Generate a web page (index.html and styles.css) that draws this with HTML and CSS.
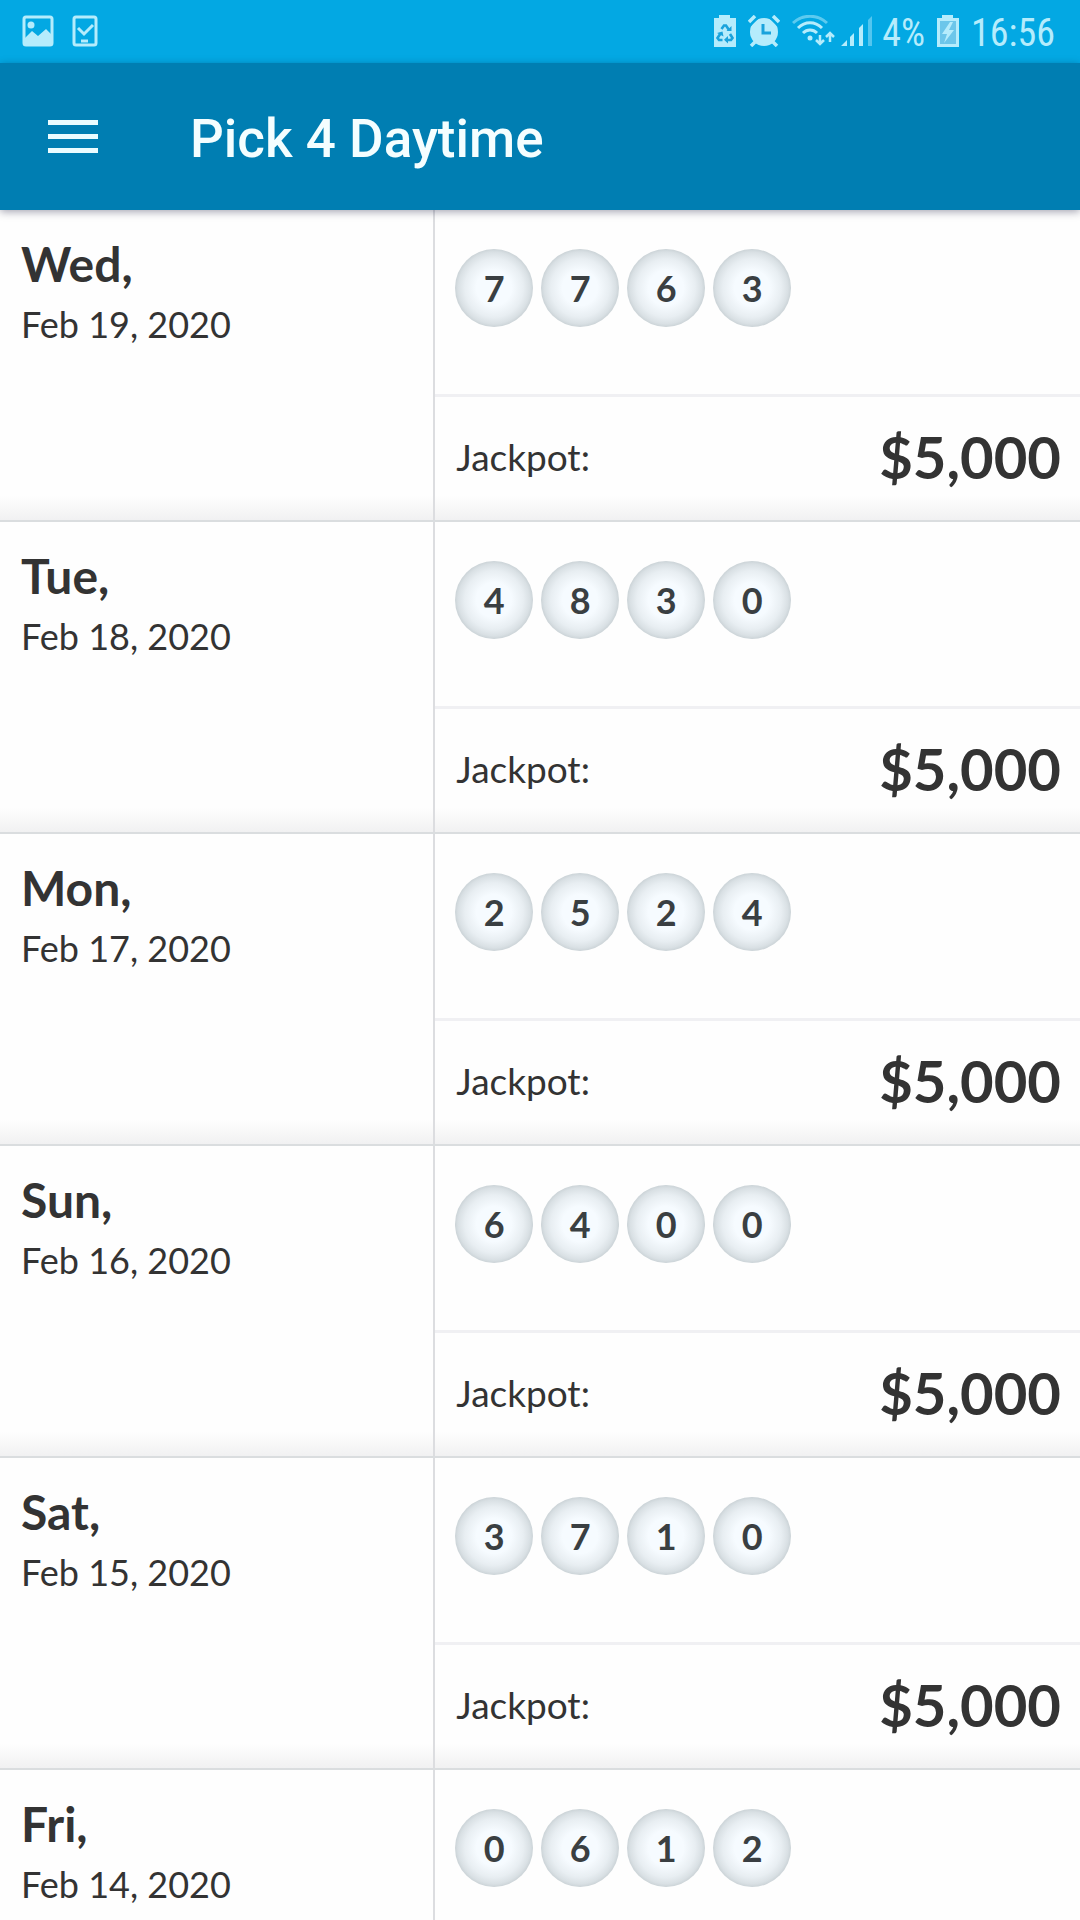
FILE: index.html
```html
<!DOCTYPE html>
<html lang="en">
<head>
	<meta charset="utf-8">
	<meta name="viewport" content="width=device-width, initial-scale=1">
	<title>Pick 4 Daytime</title>
	<link rel="stylesheet" href="styles.css">
</head>

<body>
<div class="status-bar">
	<div class="status-left">
		<svg width="32" height="32" viewBox="0 0 32 32">
			<rect x="2" y="2" width="28" height="28" rx="2" fill="none" stroke="currentColor" stroke-width="3"/>
			<circle cx="9" cy="10" r="3.5" fill="currentColor"/>
			<path d="M2 24l8-8 6 5 8-7 6 6v10H2z" fill="currentColor"/>
		</svg>
		<svg width="26" height="32" viewBox="0 0 26 32" fill="none" stroke="currentColor" stroke-width="3">
			<rect x="2" y="2" width="22" height="28" rx="2"/>
			<path d="M6 13l6 6 9-9M9 26h7"/>
		</svg>
	</div>
	<div class="status-right">
		<svg width="22" height="32" viewBox="0 0 22 32">
			<path d="M5 0h11v3h6v29H0V3h5z" fill="currentColor"/>
			<g fill="none" stroke="#1aa3dc" stroke-width="2.6">
				<path d="M7.500 14l2.500-3.500h2l3 4.500M16 19l2.500 4-1.500 2h-4M8.500 25H5l-1.500-2 3-4.500"/>
			</g>
			<path d="M12.500 16h5v-5zM14 21v7.500l-4-3.700zM3 18l5.500-1.500 1 5z" fill="#1aa3dc"/>
		</svg>
		<svg width="32" height="32" viewBox="0 0 32 32">
			<circle cx="16" cy="17" r="14" fill="currentColor"/>
			<path d="M1 9l8-8M31 9l-8-8" stroke="#03a8e3" stroke-width="6"/>
			<path d="M1 7l6-6M31 7l-6-6M7 27l-4 4M25 27l4 4" stroke="currentColor" stroke-width="3.500"/>
			<path d="M15 9v9h8" fill="none" stroke="#1aa3dc" stroke-width="3"/>
		</svg>
		<svg class="icon-wifi" width="43" height="32" viewBox="0 0 43 32" fill="none" stroke="currentColor" stroke-width="3">
			<path d="M1 8C11-1 25-1 35 8" opacity=".5"/>
			<path d="M6 13C13 6 23 6 30 13M11 18c4-4 10-4 14 0"/>
			<circle cx="18" cy="23" r="2.5" fill="currentColor" stroke="none"/>
			<path d="M28 20v9M24 25l4 4 4-4M38 27v-9M34 22l4-4 4 4" stroke-width="2.5"/>
		</svg>
		<svg class="icon-signal" width="32" height="32" viewBox="0 0 32 32" fill="currentColor">
			<path d="M0 31l6-6v6zM9 22l4-4v13H9zM18 13l4-4v22h-4z"/>
			<path d="M27 5l4-4v30h-4z" opacity=".45"/>
		</svg>
		<span>4%</span>
		<svg width="22" height="32" viewBox="0 0 22 32">
			<path d="M5 0h11v3h6v29H0V3h5z" fill="currentColor"/>
			<path d="M3 6h16v23H3z" fill="#6cc6ea"/>
			<path d="M13 7L5 19h5l-3 9 10-13h-5l4-8z" fill="currentColor"/>
		</svg>
		<span>16:56</span>
	</div>
</div>

<header class="header">
	<button class="menu-button" type="button" aria-label="Menu">
		<span></span>
		<span></span>
		<span></span>
	</button>
	<h1>Pick 4 Daytime</h1>
</header>

<ul class="draws">
	<li class="draw">
		<div class="draw-date"><strong>Wed,</strong><span>Feb 19, 2020</span></div>
		<div class="draw-result">
			<div class="balls"><span>7</span><span>7</span><span>6</span><span>3</span></div>
			<div class="jackpot"><span>Jackpot:</span><strong>$5,000</strong></div>
		</div>
	</li>
	<li class="draw">
		<div class="draw-date"><strong>Tue,</strong><span>Feb 18, 2020</span></div>
		<div class="draw-result">
			<div class="balls"><span>4</span><span>8</span><span>3</span><span>0</span></div>
			<div class="jackpot"><span>Jackpot:</span><strong>$5,000</strong></div>
		</div>
	</li>
	<li class="draw">
		<div class="draw-date"><strong>Mon,</strong><span>Feb 17, 2020</span></div>
		<div class="draw-result">
			<div class="balls"><span>2</span><span>5</span><span>2</span><span>4</span></div>
			<div class="jackpot"><span>Jackpot:</span><strong>$5,000</strong></div>
		</div>
	</li>
	<li class="draw">
		<div class="draw-date"><strong>Sun,</strong><span>Feb 16, 2020</span></div>
		<div class="draw-result">
			<div class="balls"><span>6</span><span>4</span><span>0</span><span>0</span></div>
			<div class="jackpot"><span>Jackpot:</span><strong>$5,000</strong></div>
		</div>
	</li>
	<li class="draw">
		<div class="draw-date"><strong>Sat,</strong><span>Feb 15, 2020</span></div>
		<div class="draw-result">
			<div class="balls"><span>3</span><span>7</span><span>1</span><span>0</span></div>
			<div class="jackpot"><span>Jackpot:</span><strong>$5,000</strong></div>
		</div>
	</li>
	<li class="draw">
		<div class="draw-date"><strong>Fri,</strong><span>Feb 14, 2020</span></div>
		<div class="draw-result">
			<div class="balls"><span>0</span><span>6</span><span>1</span><span>2</span></div>
		</div>
	</li>
</ul>
</body>
</html>
```

FILE: styles.css
```css
*{box-sizing:border-box;}
body{display:flex;flex-direction:column;height:100vh;margin:0;background-color:#fefefe;color:#333;font-family:Lato, sans-serif;font-size:36px;}

/* status bar */
.status-bar{display:flex;flex:none;justify-content:space-between;align-items:center;height:63px;padding:0 25px 2px 22px;background-color:#03a8e3;color:#b5ecfc;font-family:"Roboto Condensed", Roboto, sans-serif;}
.status-bar svg{display:block;flex:none;}
.status-left{display:flex;gap:18px;}
.status-right{display:flex;align-items:center;gap:12px;font-size:38px;line-height:40px;}
.status-right span{padding-top:4px;}
.icon-wifi{margin-right:-6px;}
.icon-signal{margin-right:-3px;}

/* title bar */
.header{display:flex;flex:none;align-items:center;gap:88px;height:147px;padding:0 44px;background-color:#007eb2;color:#f4feff;position:relative;z-index:1;box-shadow:0 2px 8px rgba(0,0,40,.35);}
.header h1{margin:0;padding-top:4px;font:500 53px/60px Roboto, sans-serif;}
.menu-button{display:flex;flex-direction:column;gap:9px;padding:4px;border:0;background:none;cursor:pointer;}
.menu-button span{width:50px;height:5px;background-color:#ebfcff;}

/* draw list */
.draws{flex:1;min-height:0;margin:0;padding:0;list-style:none;overflow-y:auto;scrollbar-width:none;}
.draw{display:grid;grid-template-columns:40.3% 1fr;height:312px;border-bottom:2px solid #dadddf;background-image:linear-gradient(to top, #f1f1f2, #fefefe 24px);}
.draw-date{display:flex;flex-direction:column;padding:24px 21px;border-right:2px solid #dcdde0;}
.draw-date strong{font-size:48px;line-height:60px;}
.draw-date span{line-height:60px;}
.draw-result{display:flex;flex-direction:column;}
.balls{display:flex;gap:8px;height:187px;padding:39px 20px;border-bottom:3px solid #f0f0f3;}
.balls span{width:78px;height:78px;border-radius:50%;background:radial-gradient(closest-side, #f6fbff 45%, #e8eef2 75%, #d9e0e4 92%, #cbd3d7);color:#3a3f42;font-size:36px;font-weight:bold;line-height:78px;text-align:center;}
.jackpot{display:flex;flex:1;justify-content:space-between;align-items:center;padding:0 19px 4px 21px;font-size:37px;}
.jackpot strong{font-size:58px;line-height:70px;}
```
